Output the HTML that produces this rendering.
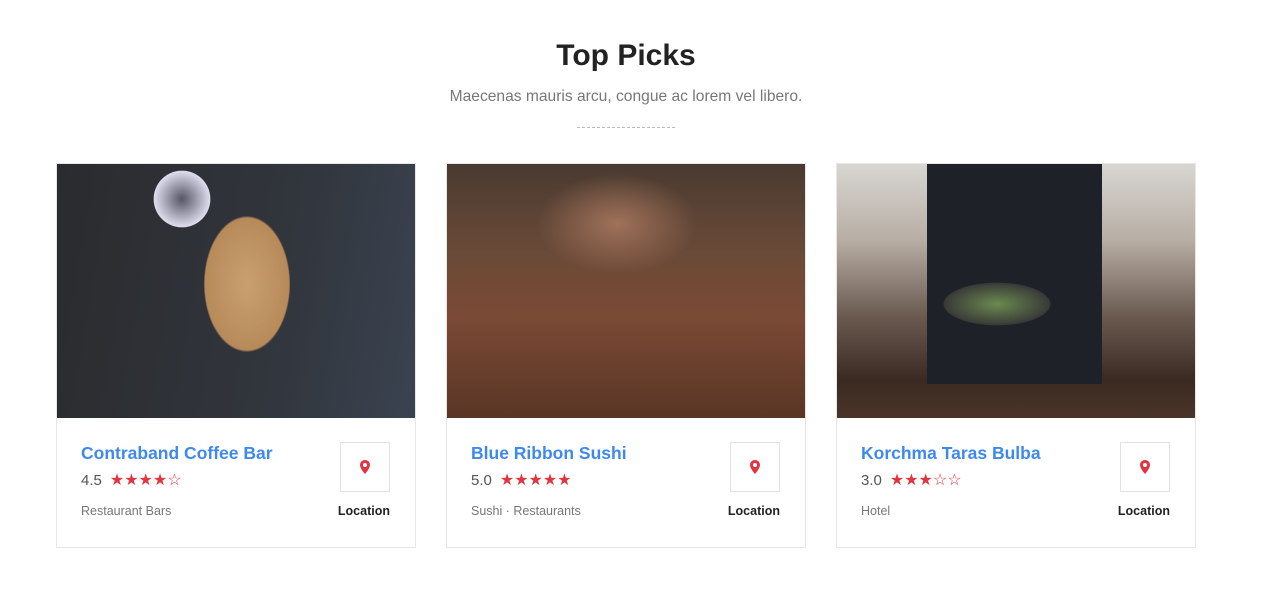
<!DOCTYPE html><html><head><style>
body{margin:0;width:1272px;height:598px;background:#fff;font-family:"Liberation Sans",sans-serif;position:relative;overflow:hidden}
h1{position:absolute;top:39px;left:0;width:1252px;text-align:center;margin:0;font-size:30px;font-weight:bold;color:#222}
.sub{position:absolute;top:88px;left:0;width:1252px;text-align:center;font-size:15.6px;color:#777}
.dash{position:absolute;top:127px;left:577px;width:98px;border-top:1px dashed #bbb}
.card{position:absolute;top:163px;width:358px;height:383px;border:1px solid #e6e6e6;background:#fff}
.img{height:254px}
.t{position:absolute;left:24px;top:279px;font-size:17.5px;font-weight:bold;color:#3e89f0}
.r{position:absolute;left:24px;top:306px;font-size:15px;color:#555}
.r span{color:#e3353f;font-size:16px;margin-left:8px;letter-spacing:0}
.c{position:absolute;left:24px;top:340px;font-size:12.5px;color:#777}
.pin{position:absolute;right:25px;top:278px;width:48px;height:48px;border:1px solid #e2e2e2;display:flex;align-items:center;justify-content:center}
.loc{position:absolute;right:25px;top:340px;font-size:12.5px;font-weight:bold;color:#222}
</style></head><body>
<h1>Top Picks</h1>
<div class="sub">Maecenas mauris arcu, congue ac lorem vel libero.</div>
<div class="dash"></div>
<div class="card" style="left:56px"><div class="img" style="background:radial-gradient(ellipse 70px 110px at 190px 120px,#c8a070 0,#b88a5a 60%,transparent 62%),radial-gradient(circle 35px at 125px 35px,#556 0,#dde 80%,transparent 82%),linear-gradient(100deg,#2a2b2e,#31353c 60%,#3a4350)"></div>
<div class="t">Contraband Coffee Bar</div><div class="r">4.5<span>★★★★☆</span></div><div class="c">Restaurant Bars</div>
<div class="pin"><svg width="10" height="14" viewBox="0 0 10 14"><path d="M5 0C2.2 0 0 2.2 0 5c0 3.5 5 9 5 9s5-5.5 5-9C10 2.2 7.8 0 5 0zm0 7a2 2 0 110-4 2 2 0 010 4z" fill="#e3353f"/></svg></div><div class="loc">Location</div></div>
<div class="card" style="left:446px"><div class="img" style="background:radial-gradient(ellipse 80px 50px at 170px 60px,#a0725a,transparent),linear-gradient(180deg,#4a3a30 0,#6a4a38 35%,#7a4a35 60%,#5a3525 100%)"></div>
<div class="t">Blue Ribbon Sushi</div><div class="r">5.0<span>★★★★★</span></div><div class="c">Sushi · Restaurants</div>
<div class="pin"><svg width="10" height="14" viewBox="0 0 10 14"><path d="M5 0C2.2 0 0 2.2 0 5c0 3.5 5 9 5 9s5-5.5 5-9C10 2.2 7.8 0 5 0zm0 7a2 2 0 110-4 2 2 0 010 4z" fill="#e3353f"/></svg></div><div class="loc">Location</div></div>
<div class="card" style="left:836px"><div class="img" style="background:radial-gradient(ellipse 75px 30px at 160px 140px,#6a8a50 0,#3a3a38 70%,transparent 72%),linear-gradient(90deg,transparent 90px,#1e2228 90px,#1e2228 265px,transparent 265px) 0 0/100% 220px no-repeat,linear-gradient(180deg,#d8d6d2 0,#b8aea4 30%,#6a5a50 60%,#3a2a22 85%,#4a3428 100%)"></div>
<div class="t">Korchma Taras Bulba</div><div class="r">3.0<span>★★★☆☆</span></div><div class="c">Hotel</div>
<div class="pin"><svg width="10" height="14" viewBox="0 0 10 14"><path d="M5 0C2.2 0 0 2.2 0 5c0 3.5 5 9 5 9s5-5.5 5-9C10 2.2 7.8 0 5 0zm0 7a2 2 0 110-4 2 2 0 010 4z" fill="#e3353f"/></svg></div><div class="loc">Location</div></div>
</body></html>
